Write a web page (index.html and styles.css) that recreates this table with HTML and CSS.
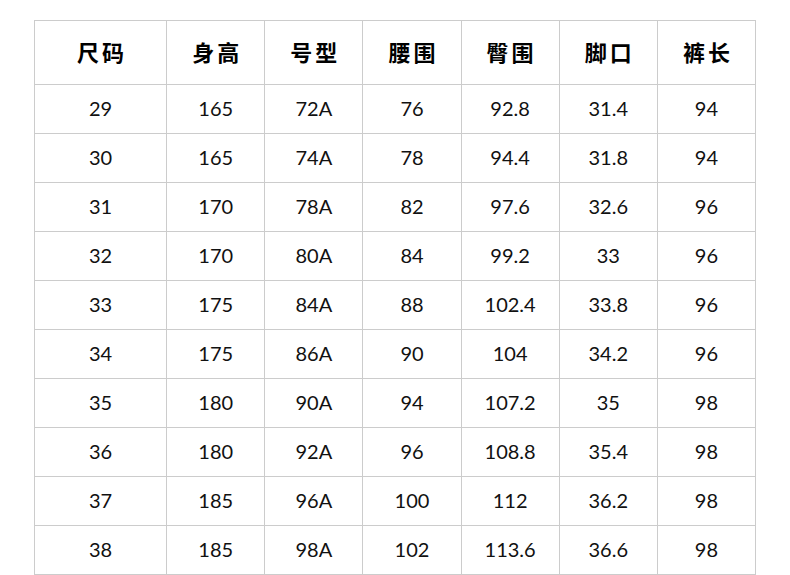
FILE: index.html
```html
<!DOCTYPE html>
<html lang="zh">
<head>
<meta charset="utf-8">
<link rel="stylesheet" href="styles.css">
</head>
<body>
<table class="size-table">
  <colgroup>
    <col class="c-first"><col class="c"><col class="c"><col class="c"><col class="c"><col class="c"><col class="c">
  </colgroup>
  <thead>
    <tr><th>尺码</th><th>身高</th><th>号型</th><th>腰围</th><th>臀围</th><th>脚口</th><th>裤长</th></tr>
  </thead>
  <tbody>
    <tr><td>29</td><td>165</td><td>72A</td><td>76</td><td>92.8</td><td>31.4</td><td>94</td></tr>
    <tr><td>30</td><td>165</td><td>74A</td><td>78</td><td>94.4</td><td>31.8</td><td>94</td></tr>
    <tr><td>31</td><td>170</td><td>78A</td><td>82</td><td>97.6</td><td>32.6</td><td>96</td></tr>
    <tr><td>32</td><td>170</td><td>80A</td><td>84</td><td>99.2</td><td>33</td><td>96</td></tr>
    <tr><td>33</td><td>175</td><td>84A</td><td>88</td><td>102.4</td><td>33.8</td><td>96</td></tr>
    <tr><td>34</td><td>175</td><td>86A</td><td>90</td><td>104</td><td>34.2</td><td>96</td></tr>
    <tr><td>35</td><td>180</td><td>90A</td><td>94</td><td>107.2</td><td>35</td><td>98</td></tr>
    <tr><td>36</td><td>180</td><td>92A</td><td>96</td><td>108.8</td><td>35.4</td><td>98</td></tr>
    <tr><td>37</td><td>185</td><td>96A</td><td>100</td><td>112</td><td>36.2</td><td>98</td></tr>
    <tr><td>38</td><td>185</td><td>98A</td><td>102</td><td>113.6</td><td>36.6</td><td>98</td></tr>
  </tbody>
</table>
</body>
</html>
```
FILE: styles.css
```css
html, body {
  margin: 0;
  padding: 0;
  background: #fff;
}
body {
  padding: 20px 0 0 34px;
  font-family: Lato, "Noto Sans", "Noto Sans CJK SC", sans-serif;
  color: #000;
}
.size-table {
  border-collapse: collapse;
  table-layout: fixed;
  width: 722px;
}
.c-first { width: 132px; }
.c { width: 98px; }
.size-table th,
.size-table td {
  border: 1px solid #cccccc;
  text-align: center;
  padding: 0;
}
.size-table th {
  height: 60px;
  padding-bottom: 3px;
  font-family: "Noto Sans CJK SC", sans-serif;
  font-weight: 700;
  font-size: 22px;
  letter-spacing: 3px;
  text-indent: 3px;
}
.size-table td {
  height: 46px;
  padding-bottom: 2px;
  font-size: 20px;
  font-weight: 400;
  color: #111;
}
```
